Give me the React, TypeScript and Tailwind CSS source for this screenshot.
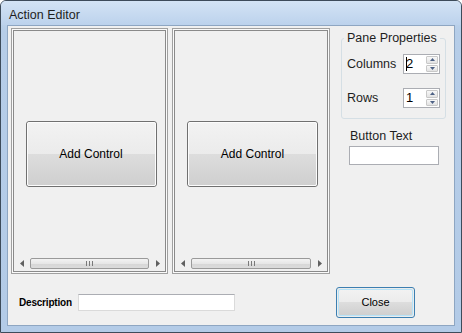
import React from "react";

const font = { fontFamily: '"Liberation Sans", Arial, sans-serif' };

function Btn({ label, w, h, focused, size }: { label: string; w: string; h: string; focused?: boolean; size: string }) {
  return (
    <div
      className={`${w} ${h} rounded-[3px] border ${focused ? "border-[#3c7fb1] p-px" : "border-[#707070]"} bg-[#ececec]`}
    >
      <div
        className={`w-full h-full rounded-[2px] flex items-center justify-center ${size} text-[#000] ${focused ? "border border-[#b6e3f8]" : "border border-[#fcfcfc]"} bg-[linear-gradient(#f2f2f2_0%,#ebebeb_50%,#dddddd_50%,#cfcfcf_100%)]`}
      >
        {label}
      </div>
    </div>
  );
}

function Scrollbar() {
  return (
    <div className="h-[13px] mx-[1px] mb-[1px] flex items-center bg-[#f0f0f0]">
      <div className="w-[13px] h-full flex items-center justify-center">
        <svg width="4" height="7" viewBox="0 0 4 7"><path d="M4 0 L0 3.5 L4 7 Z" fill="#606060" /></svg>
      </div>
      <div className="flex-1 h-[11px] rounded-[2px] border border-[#9a9a9a] bg-[linear-gradient(#f3f3f3,#e7e7e7_50%,#d6d6d6_51%,#dcdcdc)] flex items-center justify-center mx-[2px]">
        <svg width="7" height="5" viewBox="0 0 7 5">
          <rect x="0" y="0" width="1" height="5" fill="#7a7a7a" />
          <rect x="3" y="0" width="1" height="5" fill="#7a7a7a" />
          <rect x="6" y="0" width="1" height="5" fill="#7a7a7a" />
        </svg>
      </div>
      <div className="w-[13px] h-full flex items-center justify-center">
        <svg width="4" height="7" viewBox="0 0 4 7"><path d="M0 0 L4 3.5 L0 7 Z" fill="#606060" /></svg>
      </div>
    </div>
  );
}

function Pane({ w }: { w: string }) {
  return (
    <div className={`${w} h-[246px] border border-[#a0a0a0] p-px bg-[#fafafa]`}>
      <div className="w-full h-full border border-[#8a8a8a] bg-[#f0f0f0] flex flex-col">
        <div className="flex-1 flex items-center justify-center">
          <div className="pt-[20px] pl-[3px]">
            <Btn label="Add Control" w="w-[131px]" h="h-[66px]" size="text-[12px]" />
          </div>
        </div>
        <Scrollbar />
      </div>
    </div>
  );
}

function Spin({ value }: { value: string }) {
  return (
    <div className="w-[37px] h-[20px] border border-[#abadb3] bg-white flex">
      <div className="flex-1 text-[13px] leading-[18px] pl-[2px] text-black flex items-center">
        {value === "2" && <span className="w-px h-[14px] bg-black mr-[-1px]" />}
        <span>{value}</span>
      </div>
      <div className="w-[14px] flex flex-col gap-px p-px">
        <div className="flex-1 rounded-[1px] border border-[#c8c8c8] bg-[linear-gradient(#f8f8f8,#e2e2e2)] flex items-center justify-center">
          <svg width="5" height="3" viewBox="0 0 5 3"><path d="M0 3 L2.5 0 L5 3 Z" fill="#4d6185" /></svg>
        </div>
        <div className="flex-1 rounded-[1px] border border-[#c8c8c8] bg-[linear-gradient(#f8f8f8,#e2e2e2)] flex items-center justify-center">
          <svg width="5" height="3" viewBox="0 0 5 3"><path d="M0 0 L2.5 3 L5 0 Z" fill="#4d6185" /></svg>
        </div>
      </div>
    </div>
  );
}

export default function App() {
  return (
    <div style={font} className="w-[462px] h-[333px] bg-white">
      <div className="w-[462px] h-[333px] rounded-t-[6px] border border-[#3d4b5a] bg-[linear-gradient(#c9dcf1,#b6cde8_30px,#b3cbe7)] flex flex-col">
        <div className="h-[24px] flex items-center pl-[8px] pt-[4px] text-[12.5px] text-[#1e1e1e] shrink-0 bg-[linear-gradient(#d3e3f5,#bcd2ec)] rounded-t-[5px]">
          Action Editor
        </div>
        <div className="flex-1 flex px-[6px] pb-[6px]">
          <div className="flex-1 border border-[#8ea6c2] bg-[#f0f0f0] flex flex-col">
            <div className="flex pl-[3px] pt-[2px]">
              <div className="flex gap-[4px]">
                <Pane w="w-[157px]" />
                <Pane w="w-[158px]" />
              </div>
              <div className="ml-[11px] flex flex-col">
                <div className="relative w-[105px] h-[81px] mt-[10px] border border-[#d5dfe5] rounded-[3px]">
                  <div className="absolute left-[2px] top-[-9px] px-[3px] bg-[#f0f0f0] text-[12.5px] leading-[16px] text-[#1e1e1e]">Pane Properties</div>
                  <div className="absolute left-[5px] top-[15px] flex items-center">
                    <span className="w-[56px] text-[12.5px] text-[#1e1e1e]">Columns</span>
                    <Spin value="2" />
                  </div>
                  <div className="absolute left-[5px] top-[49px] flex items-center">
                    <span className="w-[56px] text-[12.5px] text-[#1e1e1e]">Rows</span>
                    <Spin value="1" />
                  </div>
                </div>
                <div className="ml-[9px] mt-[10px] text-[12.5px] text-[#1e1e1e] leading-[15px]">Button Text</div>
                <div className="ml-[8px] mt-[2px] w-[90px] h-[19px] border border-[#abadb3] bg-white" />
              </div>
            </div>
            <div className="flex items-center mt-[13px] pl-[11px]">
              <span className="text-[10px] font-bold text-black w-[59px] tracking-[-0.2px]">Description</span>
              <div className="w-[157px] h-[17px] border border-[#dadada] border-t-[#abadb3] bg-white" />
              <div className="ml-[101px]">
                <Btn label="Close" w="w-[79px]" h="h-[31px]" size="text-[11px]" focused />
              </div>
            </div>
          </div>
        </div>
      </div>
    </div>
  );
}
